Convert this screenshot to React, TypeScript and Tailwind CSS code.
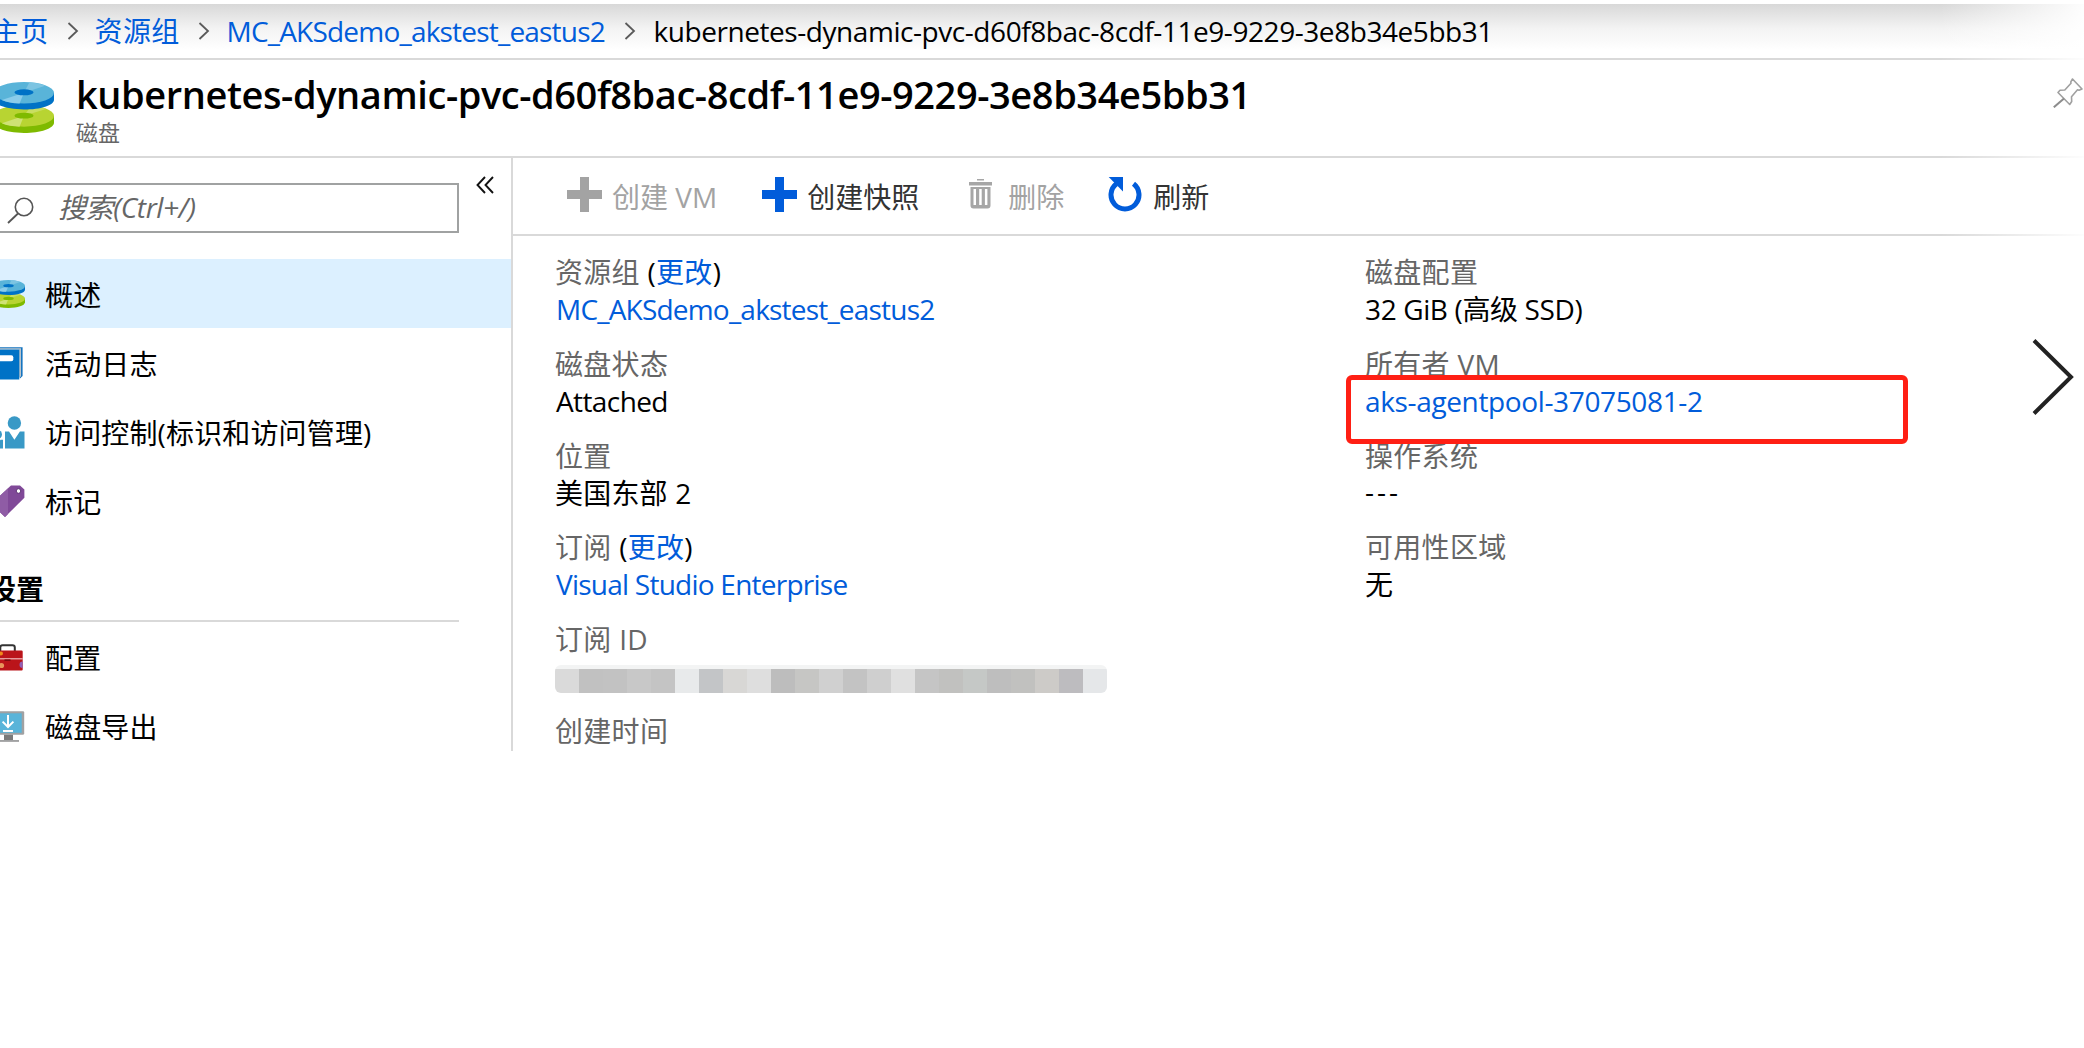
import React from "react";

function Disks({ className }: { className: string }) {
  return (
    <svg viewBox="0 0 61 52" preserveAspectRatio="none" className={className}>
      <path d="M0 34.500v7C0 47.200 13.700 52 30.500 52S61 47.200 61 41.500v-7z" fill="#7fba00" />
      <ellipse cx="30.500" cy="34.500" rx="30.500" ry="11" fill="#b8d432" />
      <path d="M30.500 34.500 8 42c4.500 2.200 11 3.300 18 3.500z" fill="#cfe275" />
      <path d="M30.500 34.500 38 24c6 .5 11 1.700 15 3.600z" fill="#c9de62" />
      <ellipse cx="30.500" cy="34.300" rx="9.700" ry="3" fill="#7fba00" />
      <path d="M0 11v7c0 5.700 13.700 10 30.500 10S61 23.700 61 18v-7z" fill="#0072c6" />
      <ellipse cx="30.500" cy="11" rx="30.500" ry="11" fill="#59b4d9" />
      <path d="M30.500 11 8 18.400c4.500 2.200 11 3.400 18 3.500z" fill="#8accea" />
      <path d="M30.500 11 36 .2c6 .4 12 1.800 16 3.700z" fill="#7cc4e2" />
      <ellipse cx="30.500" cy="10.500" rx="9.700" ry="3" fill="#0072c6" />
    </svg>
  );
}

const iconBox = "h-[34px] w-[34px] shrink-0";

const DiskIcon = (
  <span className="flex h-[34px] w-[34px] shrink-0 items-center">
    <Disks className="h-7 w-[33px]" />
  </span>
);

const BookIcon = (
  <svg viewBox="-8 0 34 34" className={iconBox}>
    <path d="M-8 1.300h30.600v28.700l-2.600 2.500V3H-8z" fill="#1474c0" />
    <path d="M-8 2.300h29v28l-2 1.700V3.500H-8z" fill="#b9c3cb" />
    <path d="M-8 3.500h27.300v30H-8z" fill="#0072c6" />
    <rect x="-6" y="9.300" width="19.300" height="6" rx="2" fill="#fff" />
  </svg>
);

const PeopleIcon = (
  <svg viewBox="-8 0 34 34" className={iconBox} fill="#3999c6">
    <circle cx="14.400" cy="8" r="6.700" />
    <path d="M5 16.500h4l5.400 8.300 5.500-8.300h4.600v17H5z" />
    <circle cx="-2.500" cy="19.500" r="4.500" />
    <path d="M-8 24.800h3l3 4 2.500-4H3v8.700H-8z" />
  </svg>
);

const TagIcon = (
  <svg viewBox="-8 0 34 34" className={iconBox}>
    <path d="M11 1.500h9l4.400 4v8.200L5 33-9 20z" fill="#804998" />
    <path d="M11 1.500 8 4.400V30l-3 3-14-13z" fill="#8f5ca5" />
    <circle cx="18.500" cy="7" r="2.300" fill="#fff" stroke="#5e3375" strokeWidth="1" />
  </svg>
);

const ToolboxIcon = (
  <svg viewBox="-8 0 34 34" className={iconBox}>
    <path d="M.3 11V7.500C.3 5.800 1 5.200 2.500 5.200h10c1.600 0 2.300.7 2.300 2.300V11" fill="none" stroke="#333" strokeWidth="2" />
    <path d="M-8 10.500h29.500q1.200 0 1.200 1.200V29.500q0 1-1 1H-8z" fill="#ba141a" />
    <circle cx="1" cy="13.500" r="2" fill="#f08a1c" />
    <circle cx="1.500" cy="25.500" r="2.600" fill="#e8955c" />
    <path d="M22.700 21.500a3.200 3.200 0 1 0 0 6.400z" fill="#9160b5" />
    <path d="M-8 18.800h30.700" stroke="#f0b9bb" strokeWidth="1.200" />
    <path d="M4.500 19.400h6v1.600h-6z" fill="#7a0c10" />
  </svg>
);

const MonitorIcon = (
  <svg viewBox="-8 0 34 34" className={iconBox}>
    <path d="M-8 2.300h31q1.200 0 1.200 1.200v20.800q0 1.500-1.500 1.500H-8z" fill="#a0a1a2" />
    <path d="M-8 4.300h29.700v19.500H-8z" fill="#59b4d9" />
    <path d="M4 25.800h9V31h6v1.500H-3V31h7z" fill="#7a7a7a" />
    <path d="M-3 31h22v1.600H-3z" fill="#a0a1a2" />
    <path d="M8 6v12M2.600 12.600 8 18l5.400-5.400M3 22h10" fill="none" stroke="#fff" strokeWidth="2" />
  </svg>
);

function NavItem({ icon, label, active }: { icon: React.ReactNode; label: string; active?: boolean }) {
  return (
    <div className={active ? "flex h-[69px] items-center gap-[19px] bg-[#dcf0ff]" : "flex h-[69px] items-center gap-[19px]"}>
      <span className="-ml-2">{icon}</span>
      <span className="pt-[3px] tracking-[0.15px]">{label}</span>
    </div>
  );
}

function Plus({ className }: { className: string }) {
  return (
    <svg viewBox="0 0 35 35" className={className}>
      <path d="M13 0h9v13h13v9H22v13h-9V22H0v-9h13z" fill="currentColor" />
    </svg>
  );
}

function Crumb() {
  return (
    <svg viewBox="0 0 12 18" className="h-[18px] w-3 shrink-0 text-[#5a5a5a]">
      <path d="M1.500 1 10 9l-8.500 8" fill="none" stroke="currentColor" strokeWidth="1.800" />
    </svg>
  );
}

function Field({ label, change, children }: { label: string; change?: boolean; children?: React.ReactNode }) {
  return (
    <div className="relative h-[91.75px] leading-[37px]">
      <div className="tracking-[0.3px] text-[#666]">
        {label}
        {change && (
          <span className="text-black">
            {" "}(<span className="text-[#015cda]">更改</span>)
          </span>
        )}
      </div>
      {children}
    </div>
  );
}

const mosaic = [
  "bg-[#dadada]", "bg-[#c1c1c1]", "bg-[#c2c2c2]", "bg-[#c8c8c8]", "bg-[#c4c4c4]", "bg-[#e8eaeb]",
  "bg-[#c3c5c7]", "bg-[#d8d7d5]", "bg-[#dedede]", "bg-[#bdbdbd]", "bg-[#c6c6c4]", "bg-[#d0d0d0]",
  "bg-[#c3c3c3]", "bg-[#cfcfcf]", "bg-[#e0e0e0]", "bg-[#c5c5c5]", "bg-[#c1c1bf]", "bg-[#c5c8c6]",
  "bg-[#bebebe]", "bg-[#c1c1bf]", "bg-[#cdcbc8]", "bg-[#bdbcbf]", "bg-[#e5e7e9]",
];

export default function App() {
  return (
    <div className="relative h-[1048px] w-[2084px] overflow-hidden whitespace-nowrap bg-white pt-1 font-['Open_Sans','Noto_Sans_CJK_SC',sans-serif] text-[28px] leading-[38px] text-black">
      {/* Breadcrumb */}
      <nav className="flex h-14 items-center border-b-2 border-[#d9d9d9] bg-linear-to-b from-[#d8d8d8] via-[#f3f3f3] via-45% to-white to-85% text-[#015cda]">
        <span className="-ml-2 tracking-[0.3px]">主页</span>
        <span className="ml-[18px] flex"><Crumb /></span>
        <span className="ml-4 tracking-[0.3px]">资源组</span>
        <span className="ml-[18px] flex"><Crumb /></span>
        <span className="ml-[17px] w-[397px] tracking-[-0.8px]">MC_AKSdemo_akstest_eastus2</span>
        <span className="flex"><Crumb /></span>
        <span className="ml-[18px] tracking-[-0.44px] text-black">kubernetes-dynamic-pvc-d60f8bac-8cdf-11e9-9229-3e8b34e5bb31</span>
      </nav>

      {/* Title */}
      <header className="flex h-[98px] border-b-2 border-[#d9d9d9] pt-[9px]">
        <Disks className="-ml-1.5 mt-[13px] h-[51px] w-[60px] shrink-0" />
        <div className="ml-[22px]">
          <h1 className="text-[38px] leading-[50px] font-semibold tracking-[-0.42px]">kubernetes-dynamic-pvc-d60f8bac-8cdf-11e9-9229-3e8b34e5bb31</h1>
          <p className="-mt-px text-[22px] leading-7 text-[#666]">磁盘</p>
        </div>
        <svg viewBox="0 0 30 30" className="relative z-10 mt-[9px] mr-px ml-auto h-[30px] w-[30px] shrink-0">
          <path d="M19.500 1 29 11l-3 1.200-1.500-.4-6 7 .2 4.700-2 3L5 14.500l2-2.200 4.800-.3 6.200-6.700-.2-1.500z" fill="#fff" stroke="#a0a0a0" strokeWidth="1.600" strokeLinejoin="round" />
          <path d="M11 20.500.8 29.300" stroke="#8c8c8c" strokeWidth="2" />
        </svg>
      </header>

      <div className="flex">
        {/* Resource menu */}
        <aside className="h-[593px] w-[513px] shrink-0 overflow-hidden border-r-2 border-[#d9d9d9]">
          <div className="flex pt-[25px]">
            <div className="flex h-[50px] w-[459px] items-center border-2 border-l-0 border-[#a0a2a2] pb-0.5 text-[#666]">
              <svg viewBox="0 0 27 27" className="mt-1.5 ml-[7px] h-[27px] w-[27px]">
                <circle cx="17" cy="10" r="8.700" fill="none" stroke="#555" strokeWidth="1.600" />
                <path d="M11 16.500 1 26" stroke="#555" strokeWidth="1.800" />
              </svg>
              <span className="ml-6 tracking-[-0.4px] italic">搜索(Ctrl+/)</span>
            </div>
            <svg viewBox="0 0 18 18" className="-mt-[7px] ml-[17px] h-[18px] w-[18px]">
              <path d="M9 1 1.500 9 9 17M17 1 9.500 9l7.500 8" fill="none" stroke="#111" strokeWidth="1.900" />
            </svg>
          </div>
          <div className="mt-[26px]">
            <NavItem icon={DiskIcon} label="概述" active />
            <NavItem icon={BookIcon} label="活动日志" />
            <NavItem icon={PeopleIcon} label="访问控制(标识和访问管理)" />
            <NavItem icon={TagIcon} label="标记" />
          </div>
          <div className="h-[87px] w-[459px] border-b-2 border-[#d9d9d9] pt-[35px]">
            <span className="-ml-3 font-bold">设置</span>
          </div>
          <NavItem icon={ToolboxIcon} label="配置" />
          <NavItem icon={MonitorIcon} label="磁盘导出" />
        </aside>

        <main className="min-w-0 flex-1">
          {/* Commands */}
          <div className="flex h-[78px] items-center gap-11 border-b-2 border-[#d9d9d9] pl-[54px] text-[#333]">
            <span className="flex items-center gap-2.5 text-[#a3a3a3]">
              <Plus className="-mt-1 h-[35px] w-[35px]" />
              <span className="mr-px pt-px">创建 VM</span>
            </span>
            <span className="flex items-center gap-2.5">
              <Plus className="-mt-1 h-[35px] w-[35px] text-[#015cda]" />
              <span className="pt-px">创建快照</span>
            </span>
            <span className="flex items-center gap-2.5 text-[#a3a3a3]">
              <svg viewBox="0 0 35 30" className="-mt-1 h-[30px] w-[35px]">
                <path d="M14 0h7v1.500h-7zM6 3h23v3.500H6z" fill="#a6a6a6" />
                <path fillRule="evenodd" d="M7.500 8h20v18.500q0 3-3 3h-14q-3 0-3-3zM10.500 10v16h2.500V10zm5.700 0v16h2.500V10zm5.700 0v16h2.500V10z" fill="#a6a6a6" />
              </svg>
              <span className="pt-px">删除</span>
            </span>
            <span className="flex items-center gap-2.5">
              <svg viewBox="0 0 35 35" className="-mt-1 h-[35px] w-[35px]">
                <path d="M8.500 6.800A14 14 0 1 0 25.500 6.800" fill="none" stroke="#015cda" strokeWidth="5" />
                <path d="M.7 0H15v14.500z" fill="#015cda" />
              </svg>
              <span className="pt-px">刷新</span>
            </span>
          </div>

          {/* Essentials */}
          <div className="flex h-[515px] overflow-hidden pt-[18px] pl-[42px]">
            <div className="w-[810px]">
              <Field label="资源组" change>
                <div className="ml-px tracking-[-0.8px] text-[#015cda]">MC_AKSdemo_akstest_eastus2</div>
              </Field>
              <Field label="磁盘状态"><div className="ml-px tracking-[-0.6px]">Attached</div></Field>
              <Field label="位置"><div className="tracking-[0.2px]">美国东部 2</div></Field>
              <Field label="订阅" change>
                <div className="ml-px tracking-[-0.76px] text-[#015cda]">Visual Studio Enterprise</div>
              </Field>
              <Field label="订阅 ID">
                <div className="mt-[7px] w-[552px] overflow-hidden rounded-md">
                  <div className="h-1 bg-[#f3f4f4]" />
                  <div className="flex h-6">
                    {mosaic.map((c, i) => <div key={i} className={`w-6 ${c}`} />)}
                  </div>
                </div>
              </Field>
              <Field label="创建时间" />
            </div>
            <div className="flex-1">
              <Field label="磁盘配置"><div className="tracking-[-0.37px]">32 GiB (高级 SSD)</div></Field>
              <Field label="所有者 VM">
                <div className="tracking-[-0.36px] text-[#015cda]">aks-agentpool-37075081-2</div>
                <div className="absolute top-[29px] -left-[19px] z-10 h-[69px] w-[562px] rounded-md border-[5px] border-[#ff1f14]" />
              </Field>
              <Field label="操作系统"><div className="-mt-0.5 tracking-[3px]">---</div></Field>
              <Field label="可用性区域"><div>无</div></Field>
            </div>
            <svg viewBox="0 0 42 76" className="mt-[85px] mr-[10px] h-[76px] w-[42px]">
              <path d="M2 1.500 39 38 2 74.500" fill="none" stroke="#222" strokeWidth="4" />
            </svg>
          </div>
        </main>
      </div>

      {/* Fade at the right edge */}
      <div className="pointer-events-none absolute top-0 right-0 h-60 w-36 bg-linear-to-r from-white/0 to-white/95" />
    </div>
  );
}
